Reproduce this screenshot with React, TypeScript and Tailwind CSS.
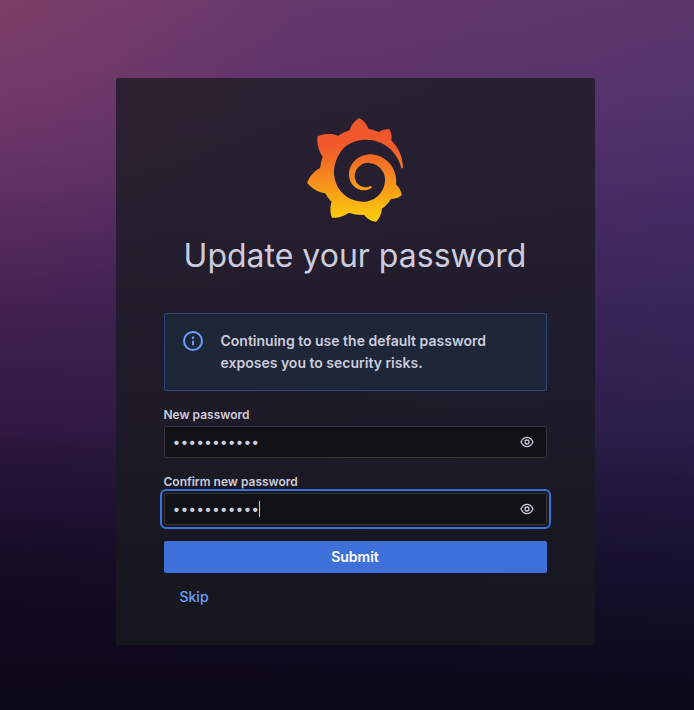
import { useId, useState } from "react";
import { SiGrafana } from "react-icons/si";

function GrafanaLogo() {
  return (
    <>
      <svg className="absolute size-0" aria-hidden="true">
        <defs>
          <linearGradient id="grafana-flame" x1="0" y1="1" x2="0" y2="0">
            <stop offset="0" stopColor="#fcd009" />
            <stop offset="0.12" stopColor="#fbbd0f" />
            <stop offset="0.4" stopColor="#f68d1e" />
            <stop offset="0.72" stopColor="#f15a2b" />
            <stop offset="1" stopColor="#ef562b" />
          </linearGradient>
        </defs>
      </svg>
      <SiGrafana className="size-[104px] overflow-visible" fill="url(#grafana-flame)" title="Grafana" />
    </>
  );
}

function InfoIcon() {
  return (
    <svg viewBox="0 0 24 24" className="size-6 shrink-0 fill-[#6e9fff]" aria-hidden="true">
      <path d="M12,2A10,10,0,1,0,22,12,10.01114,10.01114,0,0,0,12,2Zm0,18a8,8,0,1,1,8-8A8.00917,8.00917,0,0,1,12,20Zm0-8.5a1,1,0,0,0-1,1v3a1,1,0,0,0,2,0v-3A1,1,0,0,0,12,11.5Zm0-4a1.25,1.25,0,1,0,1.25,1.25A1.25,1.25,0,0,0,12,7.5Z" />
    </svg>
  );
}

function EyeIcon() {
  return (
    <svg viewBox="0 0 24 24" className="size-4 fill-current" aria-hidden="true">
      <path d="M21.92,11.6C19.9,6.91,16.1,4,12,4S4.1,6.91,2.08,11.6a1,1,0,0,0,0,.8C4.1,17.09,7.9,20,12,20s7.9-2.91,9.92-7.6A1,1,0,0,0,21.92,11.6ZM12,18c-3.17,0-6.17-2.29-7.9-6C5.83,8.29,8.83,6,12,6s6.17,2.29,7.9,6C18.17,15.71,15.17,18,12,18ZM12,8a4,4,0,1,0,4,4A4,4,0,0,0,12,8Zm0,6a2,2,0,1,1,2-2A2,2,0,0,1,12,14Z" />
    </svg>
  );
}

function PasswordField({ label, focused = false }: { label: string; focused?: boolean }) {
  const id = useId();
  const [value, setValue] = useState("newpassword");
  const [visible, setVisible] = useState(false);
  const [pristine, setPristine] = useState(true);
  return (
    <div className="mb-4">
      <label htmlFor={id} className="mb-1 block text-xs leading-[15px] font-semibold">
        {label}
      </label>
      <div className="relative">
        <input
          id={id}
          type={visible ? "text" : "password"}
          autoFocus={focused}
          value={value}
          onChange={(e) => {
            setPristine(false);
            setValue(e.target.value);
          }}
          onBlur={() => setPristine(false)}
          className="block h-8 w-full rounded-xs border border-[#35353b] bg-[#111217] pr-9 pb-0.5 pl-2 text-sm outline-offset-2 outline-[#3d71d9] focus:outline-2"
        />
        {focused && pristine && (
          <span className="pointer-events-none absolute top-2 left-[95px] h-4 w-px bg-[#ccccdc]" />
        )}
        <button
          type="button"
          aria-label="Show password"
          onClick={() => setVisible(!visible)}
          className="absolute inset-y-0 right-3 flex items-center"
        >
          <EyeIcon />
        </button>
      </div>
    </div>
  );
}

export default function App() {
  return (
    <main className="flex min-h-screen items-center justify-center bg-[radial-gradient(ellipse_at_top_left,#8c446070,transparent_30%),linear-gradient(to_bottom,transparent_60%,#0b0818_100%),linear-gradient(to_right,transparent,#20306c48),linear-gradient(to_bottom,#703a6d_0%,#65336b_15%,#52295f_30%,#40204f_45%,#2c163c_65%,#1f1031_82%,#1b1028_100%)] pt-[13px] pl-4 font-['Inter',sans-serif] text-sm text-[#ccccdc]">
      <section className="w-full max-w-[479px] rounded-xs bg-[#181b1fbf] px-12 pt-10 pb-8">
        <header className="flex flex-col items-center">
          <GrafanaLogo />
          <h1 className="mt-3.5 text-center text-[32px] leading-10">Update your password</h1>
        </header>

        <form className="mt-[37px]" onSubmit={(e) => e.preventDefault()}>
          <div
            role="alert"
            className="mb-4 flex gap-4 rounded-xs border border-[#2a4577] bg-[#1d2738] py-4 pr-8 pl-4"
          >
            <span className="flex h-[22px] shrink-0 items-center">
              <InfoIcon />
            </span>
            <p className="text-sm leading-[22px] font-semibold">
              Continuing to use the default password exposes you to security risks.
            </p>
          </div>

          <PasswordField label="New password" />
          <PasswordField label="Confirm new password" focused />

          <button type="submit" className="h-8 w-full rounded-xs bg-[#3d71d9] font-semibold text-white">
            Submit
          </button>
          <button type="button" className="mt-2 h-8 px-4 font-medium text-[#6e9fff]">
            Skip
          </button>
        </form>
      </section>
    </main>
  );
}
